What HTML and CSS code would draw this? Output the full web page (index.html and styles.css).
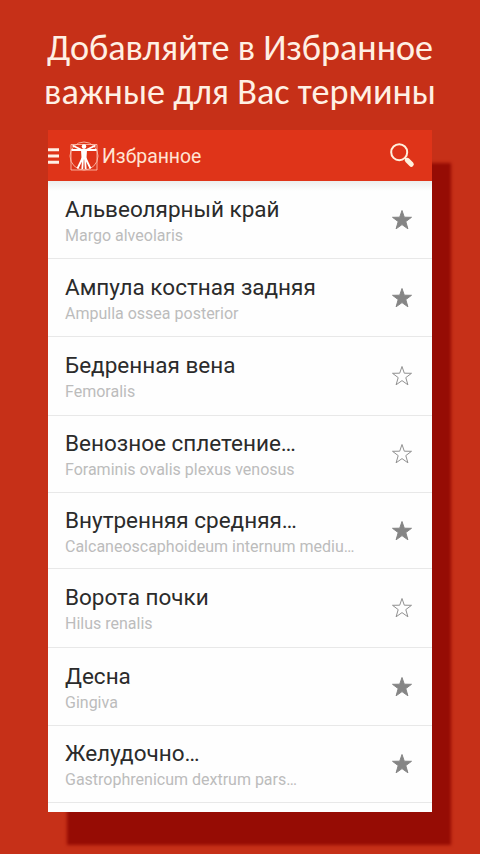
FILE: index.html
```html
<!DOCTYPE html>
<html lang="ru">
<head>
<meta charset="utf-8">
<title>Избранное</title>
<link rel="stylesheet" href="styles.css">
</head>
<body>
<svg class="defs" width="0" height="0" aria-hidden="true">
  <symbol id="star" viewBox="0 0 22 22"><path d="M11 1.500 13.300 8.200 20.500 8.300 14.800 12.600 16.900 19.800 11 15.600 5.100 19.800 7.200 12.600 1.500 8.300 8.700 8.200Z"/></symbol>
</svg>
<h1 class="headline"><span class="line line-one">Добавляйте в Избранное</span><span class="line line-two">важные для Вас термины</span></h1>
<main class="phone">
  <header class="bar">
    <svg class="menu" viewBox="0 0 11 18"><path d="M0 2.800h11M0 9h11M0 15.200h11"/></svg>
    <svg class="logo" viewBox="0 0 30 32">
      <circle cx="15" cy="16" r="14"/>
      <path class="frame" d="M2 4.500H28V30H2Z"/>
      <path class="arms" d="M2.500 10H27.500M3.500 5.500 13 10M26.500 5.500 17 10"/>
      <path class="body" d="M12 9.500h6l-.6 10H12.600z"/>
      <circle class="head" cx="15" cy="6.600" r="2.300"/>
      <path class="legs" d="M14 18 13.300 29M16 18 16.700 29M13.500 18 8.500 28.500M16.500 18 21.500 28.500"/>
    </svg>
    <span class="title">Избранное</span>
    <svg class="search" viewBox="0 0 26 26"><circle cx="10.200" cy="10.200" r="8"/><path class="neck" d="M15.800 15.800 18 18"/><path class="handle" d="M18.300 18.300 22.300 22.300"/></svg>
  </header>
  <ul class="list">
    <li class="row"><div class="text"><div class="term">Альвеолярный край</div><div class="latin">Margo alveolaris</div></div><svg class="star on"><use href="#star"/></svg></li>
    <li class="row"><div class="text"><div class="term">Ампула костная задняя</div><div class="latin">Ampulla ossea posterior</div></div><svg class="star on"><use href="#star"/></svg></li>
    <li class="row tall"><div class="text"><div class="term">Бедренная вена</div><div class="latin">Femoralis</div></div><svg class="star"><use href="#star"/></svg></li>
    <li class="row short"><div class="text"><div class="term">Венозное сплетение…</div><div class="latin">Foraminis ovalis plexus venosus</div></div><svg class="star"><use href="#star"/></svg></li>
    <li class="row short tight"><div class="text"><div class="term">Внутренняя средняя…</div><div class="latin">Calcaneoscaphoideum internum mediu…</div></div><svg class="star on"><use href="#star"/></svg></li>
    <li class="row tall"><div class="text"><div class="term">Ворота почки</div><div class="latin">Hilus renalis</div></div><svg class="star"><use href="#star"/></svg></li>
    <li class="row"><div class="text"><div class="term">Десна</div><div class="latin">Gingiva</div></div><svg class="star on"><use href="#star"/></svg></li>
    <li class="row short"><div class="text"><div class="term">Желудочно…</div><div class="latin">Gastrophrenicum dextrum pars…</div></div><svg class="star on"><use href="#star"/></svg></li>
  </ul>
</main>
</body>
</html>
```
FILE: styles.css
```css
* { box-sizing: border-box; }
body {
  margin: 0;
  height: 854px;
  overflow: hidden;
  background: #c63018;
  font-family: Roboto, "Liberation Sans", sans-serif;
}
.defs { position: absolute; }
.headline {
  margin: 0;
  padding-top: 26px;
  height: 130px;
  color: #fff0e4;
  font: 400 36.200px/44px Carlito, "Open Sans", sans-serif;
  display: flex;
  flex-direction: column;
  align-items: center;
}
.line { white-space: nowrap; }
.phone {
  width: 384px;
  height: 682px;
  margin-left: 48px;
  background: #fefefe;
  box-shadow: 19px 33px 3px #960c04;
  overflow: hidden;
}
.bar {
  height: 51px;
  background: #df3419;
  display: flex;
  align-items: center;
}
svg { fill: none; flex: none; }
.menu { width: 11px; height: 18px; stroke: #fff0e6; stroke-width: 3; }
.logo { width: 30px; height: 32px; margin: 0 3px 0 10px; stroke: #ffc9b8; stroke-width: .8; }
.logo .arms { stroke: #fff; stroke-width: 1.8; }
.logo .legs { stroke: #fff; stroke-width: 1.8; }
.logo .body, .logo .head { fill: #fff; stroke: none; }
.title { flex: 1; padding-top: 2px; color: #ffe4d4; font-size: 19.400px; }
.search { width: 26px; height: 26px; margin: -2px 17px 0 0; stroke: #fff0dc; stroke-width: 2; }
.search .handle { stroke-width: 5; stroke-linecap: round; }
.list {
  margin: 0;
  padding: 0;
  list-style: none;
  background: linear-gradient(#eceeed, #fefefe 10px);
}
.row {
  height: 78px;
  padding: 0 19px 0 17px;
  display: flex;
  border-bottom: 1px solid #e8e8e8;
}
.row.tall { height: 79px; }
.row.short { height: 77px; }
.row.tight { height: 76px; }
.text { flex: 1; white-space: nowrap; padding-top: 15px; }
.short .text { padding-top: 14px; }
.term { color: #2b2b2b; font-size: 22.500px; line-height: 27px; }
.latin { color: #bcbcbc; font-size: 16px; line-height: 23px; padding-top: 1px; }
.star { width: 22px; height: 22px; margin-top: 28px; stroke: #909090; stroke-width: 1; }
.short .star { margin-top: 27px; }
.star.on { fill: #858585; stroke: #858585; }
```
